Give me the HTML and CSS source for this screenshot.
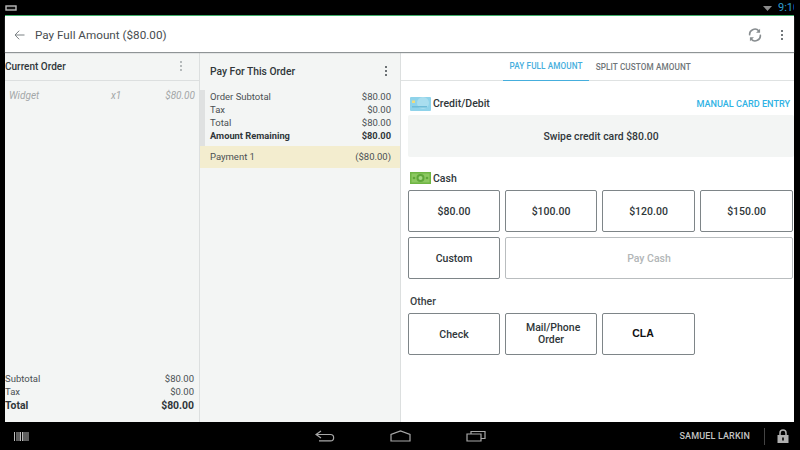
FILE: index.html
```html
<!DOCTYPE html>
<html lang="en">
<head>
<meta charset="utf-8">
<title>Pay Full Amount</title>
<link rel="stylesheet" href="styles.css">
</head>
<body>
<div class="screen">
  <div class="status">
    <svg class="status-box" width="12" height="6" viewBox="0 0 12 6"><rect x="1" y="1" width="10" height="4" fill="#111" stroke="#bbb" stroke-width="1.4"/></svg>
    <svg class="wifi" width="9" height="5" viewBox="0 0 9 5"><path d="M0 0H9L4.500 5Z" fill="#8a8a8a"/></svg>
    <span class="clock">9:10</span>
  </div>
  <div class="app">
    <header class="appbar">
      <svg class="back" width="11" height="10" viewBox="0 0 11 10"><path d="M10.500 5H1M5.200 0.700L1 5L5.200 9.300" fill="none" stroke="#7b8184" stroke-width="1"/></svg>
      <h1 class="title">Pay Full Amount ($80.00)</h1>
      <svg class="sync" width="14" height="14" viewBox="0 0 16 16"><path d="M2 8.500A6 6 0 0 1 12.500 3.500M14 7.500A6 6 0 0 1 3.500 12.500" fill="none" stroke="#888d90" stroke-width="1.800"/><path d="M13.800 0.800V5.500H9.200ZM2.200 15.200V10.500H6.800Z" fill="#888d90"/></svg>
      <span class="dots dots-bar"><i></i><i></i><i></i></span>
    </header>
    <main class="cols">
      <section class="col-order">
        <div class="order-head"><h2 class="order-title">Current Order</h2><span class="dots dots-light"><i></i><i></i><i></i></span></div>
        <div class="order-item"><span class="item-name">Widget</span><span class="item-qty">x1</span><span class="item-price">$80.00</span></div>
        <div class="order-totals">
          <div class="row"><span>Subtotal</span><span>$80.00</span></div>
          <div class="row"><span>Tax</span><span>$0.00</span></div>
          <div class="row row-grand"><span>Total</span><span>$80.00</span></div>
        </div>
      </section>
      <section class="col-pay">
        <div class="pay-head"><h2 class="pay-title">Pay For This Order</h2><span class="dots dots-dark"><i></i><i></i><i></i></span></div>
        <div class="pay-summary">
          <div class="row"><span>Order Subtotal</span><span>$80.00</span></div>
          <div class="row"><span>Tax</span><span>$0.00</span></div>
          <div class="row"><span>Total</span><span>$80.00</span></div>
          <div class="row row-bold"><span>Amount Remaining</span><span>$80.00</span></div>
        </div>
        <div class="payment"><span>Payment 1</span><span>($80.00)</span></div>
      </section>
      <section class="col-main">
        <nav class="tabs"><span class="tab tab-on">PAY FULL AMOUNT</span><span class="tab">SPLIT CUSTOM AMOUNT</span></nav>
        <div class="content">
          <div class="method-head">
            <svg class="method-icon" width="21" height="14" viewBox="0 0 21 14"><rect width="21" height="14" rx="1" fill="#8fd3ea"/><circle cx="13" cy="6" r="6" fill="#a9deef"/><rect x="2" y="3.500" width="3" height="2.500" fill="#f0dc7a"/><rect x="2" y="9" width="15" height="1.500" fill="#6fbcd8"/></svg>
            <h3 class="method-name">Credit/Debit</h3>
            <a class="manual">MANUAL CARD ENTRY</a>
          </div>
          <div class="swipe">Swipe credit card $80.00</div>
          <div class="method-head cash-head">
            <svg class="method-icon" width="21" height="12" viewBox="0 0 21 12"><rect width="21" height="12" fill="#6fb544"/><rect x="1.500" y="1.500" width="18" height="9" fill="#8cc861"/><circle cx="10.500" cy="6" r="4" fill="#5fa63a"/><circle cx="10.500" cy="6" r="2" fill="#a5d884"/><circle cx="4" cy="6" r="1.300" fill="#5fa63a"/><circle cx="17" cy="6" r="1.300" fill="#5fa63a"/></svg>
            <h3 class="method-name">Cash</h3>
          </div>
          <div class="grid">
            <button class="btn">$80.00</button>
            <button class="btn">$100.00</button>
            <button class="btn">$120.00</button>
            <button class="btn">$150.00</button>
            <button class="btn">Custom</button>
            <button class="btn btn-off">Pay Cash</button>
          </div>
          <h3 class="other">Other</h3>
          <div class="grid">
            <button class="btn">Check</button>
            <button class="btn btn-tight">Mail/Phone Order</button>
            <button class="btn btn-cla">CLA</button>
          </div>
        </div>
      </section>
    </main>
  </div>
  <footer class="nav">
    <svg class="barcode" width="15" height="9" viewBox="0 0 15 9"><path d="M0.500 0V9M3 0V9M5 0V9M6.500 0V9M8.500 0V9M10 0V9M12 0V9M14 0V9" stroke="#bdbdbd" stroke-width="1"/></svg>
    <div class="nav-keys">
      <svg width="20" height="12" viewBox="0 0 20 12"><path d="M6 1L1 4.500L6 8M1.500 4.500H15.500A3 3 0 0 1 15.500 10.800H4" fill="none" stroke="#a8a8a8" stroke-width="1.200"/></svg>
      <svg width="21" height="12" viewBox="0 0 21 12"><path d="M1 11V4.500L10.500 1L20 4.500V11Z" fill="none" stroke="#a8a8a8" stroke-width="1.200"/></svg>
      <svg width="20" height="12" viewBox="0 0 20 12"><path d="M1 4H15V11H1ZM5 4V1.500H19V8.500H15" fill="none" stroke="#a8a8a8" stroke-width="1.200"/></svg>
    </div>
    <span class="user">SAMUEL LARKIN</span>
    <span class="divider"></span>
    <svg class="lock" width="12" height="14" viewBox="0 0 12 14"><path d="M3 6V4A3 3 0 0 1 9 4V6" fill="none" stroke="#b0b0b0" stroke-width="1.500"/><rect x="0.500" y="6" width="11" height="8" fill="#b0b0b0"/><rect x="5" y="8.500" width="2" height="3" fill="#222"/></svg>
  </footer>
</div>
</body>
</html>
```
FILE: styles.css
```css
* { box-sizing: border-box; }
html, body { margin: 0; padding: 0; }
body { width: 800px; height: 450px; overflow: hidden; background: #000; font-family: Roboto, "Liberation Sans", sans-serif; color: #2b3235; }
h1, h2, h3 { margin: 0; font-weight: 500; }
.screen { width: 800px; height: 450px; display: flex; flex-direction: column; }

.status { height: 15px; flex: none; display: flex; align-items: flex-start; padding-left: 5px; overflow: hidden; }
.status-box { margin-top: 5px; }
.wifi { margin-left: auto; margin-top: 6px; }
.clock { width: 16px; margin: 2px 6px 0 6px; height: 12px; overflow: hidden; white-space: nowrap; font-size: 11px; line-height: 12px; color: #2f9fd0; }

.app { height: 407px; flex: none; margin: 0 6px 0 5px; display: flex; flex-direction: column; border-top: 1px solid #3fae6a; background: #fff; }
.appbar { height: 36px; flex: none; display: flex; align-items: center; padding: 1px 11px 0 9px; background: #fff; box-shadow: 0 1px 1px #8f9496; position: relative; }
.back { margin-right: 10px; }
.title { flex: 1; font-size: 11.700px; font-weight: 400; color: #474d50; }
.sync { margin-right: 19px; }
.dots { display: flex; flex-direction: column; gap: 2px; }
.dots i { width: 2px; height: 2px; display: block; background: #72787b; }
.dots-light i { background: #b5babb; }
.dots-dark i { background: #6c7275; }

.cols { flex: 1; min-height: 0; display: flex; }

.col-order { width: 195px; flex: none; display: flex; flex-direction: column; background: #f3f5f4; border-right: 1px solid #dcdfdf; }
.order-head { height: 29px; flex: none; display: flex; align-items: center; justify-content: space-between; padding: 0 17px 0 0; border-bottom: 1px solid #dcdfdf; }
.order-title { font-size: 10px; color: #30373a; }
.order-item { display: flex; padding: 9px 4px 0 4px; font-size: 10px; font-style: italic; color: #a3a7a8; line-height: 12px; }
.item-name { width: 102px; }
.item-qty { flex: 1; }
.order-totals { margin-top: auto; padding: 0 5px 9px 0; font-size: 9.500px; color: #4a5053; }
.row { display: flex; justify-content: space-between; line-height: 13px; }
.row-grand { font-size: 10.400px; font-weight: 700; color: #30373a; line-height: 15px; }

.col-pay { width: 201px; flex: none; background: #f3f5f4; border-right: 1px solid #dcdfdf; }
.pay-head { height: 38px; display: flex; align-items: center; justify-content: space-between; padding: 0 13px 0 10px; }
.pay-title { font-size: 10.300px; color: #30373a; }
.pay-summary { height: 56px; padding: 0 9px 0 5px; border-left: 5px solid #dfe1e1; font-size: 9.500px; color: #4a5053; }
.row-bold { font-weight: 700; font-size: 9.300px; color: #30373a; }
.payment { height: 22px; display: flex; align-items: center; justify-content: space-between; padding: 0 9px 1px 10px; background: #f3edcf; font-size: 9.500px; color: #4a5053; }

.col-main { flex: 1; min-width: 0; display: flex; flex-direction: column; background: #fff; }
.tabs { height: 29px; flex: none; display: flex; padding-left: 102px; border-bottom: 1px solid #dfe2e2; font-size: 8.200px; font-weight: 500; letter-spacing: 0.1px; color: #6f7578; }
.tab { display: flex; align-items: center; padding: 0 6.500px; height: 29px; }
.tab-on { color: #45aedd; border-bottom: 1px solid #45aedd; }
.content { padding: 15px 0 0 7px; }
.method-head { height: 15px; display: flex; align-items: center; padding: 0 4px 0 2px; }
.method-icon { flex: none; margin-right: 2px; }
.method-name { font-size: 10.500px; font-weight: 500; color: #30373a; }
.manual { margin-left: auto; font-size: 9.100px; font-weight: 500; color: #2fb2e4; }
.swipe { height: 42px; margin-top: 4px; display: flex; align-items: center; justify-content: center; background: #f3f5f4; border-radius: 2px; font-size: 10.400px; font-weight: 500; color: #30373a; }
.cash-head { margin-top: 14px; height: 14px; }
.grid { display: grid; grid-template-columns: 92px 92px 93px 93px; gap: 5px; margin-top: 5px; }
.btn { height: 42px; padding: 1px 0 0; background: #fff; border: 1px solid #7e8588; border-radius: 2px; font-family: Roboto, "Liberation Sans", sans-serif; font-size: 10.500px; font-weight: 500; line-height: 12px; color: #30373a; }
.btn-off { grid-column: 2 / 5; border-color: #b9bdbf; color: #b2b6b7; }
.btn-tight { padding: 0 20px 1px; }
.btn-cla { font-family: "Liberation Sans", sans-serif; font-weight: 700; font-size: 10.500px; color: #111; padding: 0 0 2px; text-indent: -11px; }
.other { margin: 17px 0 0 2px; font-size: 10.500px; line-height: 12px; color: #3a4144; }
.other + .grid { margin-top: 5px; }

.nav { flex: 1; min-height: 0; display: flex; align-items: center; padding: 0 11px 0 14px; color: #c4c4c4; }
.barcode { flex: none; }
.nav-keys { display: flex; align-items: center; gap: 55px; margin-left: 286px; }
.user { margin-left: auto; font-size: 9px; font-weight: 500; letter-spacing: 0.15px; }
.divider { width: 1px; height: 17px; margin: 0 12px 0 14px; background: #444; }
```
